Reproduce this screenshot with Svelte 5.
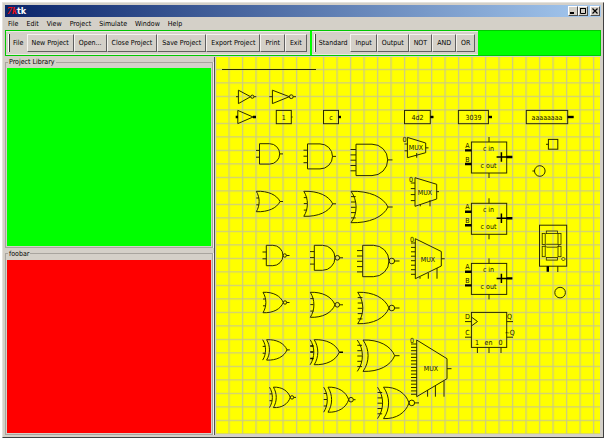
<script>
  const menus = ['File', 'Edit', 'View', 'Project', 'Simulate', 'Window', 'Help'];
  const toolbars = [
    { name: 'File', items: ['New Project', 'Open...', 'Close Project', 'Save Project', 'Export Project', 'Print', 'Exit'] },
    { name: 'Standard', items: ['Input', 'Output', 'NOT', 'AND', 'OR'] }
  ];

  // pin offsets by number of inputs, measured from the top of a gate
  const pinRows = { 2: [6.7, 13.5], 3: [6.3, 12.3, 18.8], 5: [5.3, 10.7, 16, 21.3, 26.6] };
  const heights = { 2: 20.4, 3: 25, 5: 31.4 };
  const bubbles = { 2: 1.7, 3: 2.3, 5: 2.8 };

  // n: inputs, p: start of the pins, x: back of the body, r: front, o: end of output
  const gates = [
    { k: 'and', n: 2, p: 256, x: 259.5, r: 279.7, y: 143.7, o: 283 },
    { k: 'and', n: 3, p: 303.5, x: 307.5, r: 332.5, y: 143.9, o: 336 },
    { k: 'and', n: 5, p: 350.5, x: 356, r: 387.7, y: 144.2, o: 392.5 },
    { k: 'or', n: 2, p: 256.3, x: 256.3, r: 280, y: 191.3, o: 283 },
    { k: 'or', n: 3, p: 303.8, x: 303.8, r: 332.7, y: 191.3, o: 336 },
    { k: 'or', n: 5, p: 351, x: 351, r: 388, y: 191.3, o: 392.7 },
    { k: 'and', inv: true, n: 2, p: 262.5, x: 266.3, r: 283, y: 245.3, o: 289.5 },
    { k: 'and', inv: true, n: 3, p: 310, x: 314.3, r: 335, y: 245.3, o: 343 },
    { k: 'and', inv: true, n: 5, p: 357, x: 362.7, r: 389, y: 245.3, o: 399.5 },
    { k: 'or', inv: true, n: 2, p: 263, x: 263, r: 283.3, y: 292.3, o: 289.5 },
    { k: 'or', inv: true, n: 3, p: 310.3, x: 310.3, r: 335, y: 292.3, o: 343 },
    { k: 'or', inv: true, n: 5, p: 357.7, x: 357.7, r: 389, y: 292.3, o: 399.5 },
    { k: 'xor', n: 2, p: 262.7, x: 266.6, r: 287, y: 339.7, o: 289.8 },
    { k: 'xor', n: 3, p: 310.2, x: 314.2, r: 339.3, y: 339.7, o: 343, bold: true },
    { k: 'xor', n: 5, p: 357.3, x: 363, r: 394.7, y: 340, o: 399.5 },
    { k: 'xor', inv: true, n: 2, p: 269.5, x: 273.4, r: 290.3, y: 387.2, o: 296 },
    { k: 'xor', inv: true, n: 3, p: 323.7, x: 328, r: 348.7, y: 387.2, o: 355.5 },
    { k: 'xor', inv: true, n: 5, p: 377.5, x: 383.5, r: 409, y: 387.2, o: 419 }
  ];

  function back(x, y, h, n) {
    const b = n + 1.8;
    return `M${x} ${y}C${x + b} ${y + h * 0.3} ${x + b} ${y + h * 0.7} ${x} ${y + h}`;
  }

  function body(g) {
    const { k, n, x, r, y } = g;
    const h = heights[n];
    const mid = y + h / 2;
    if (k === 'and') {
      return `M${x} ${y}H${r - h / 2}A${h / 2} ${h / 2} 0 0 1 ${r - h / 2} ${y + h}H${x}Z`;
    }
    const w = r - x;
    let d = back(x, y, h, n);
    d += `M${x} ${y}C${x + w * 0.5} ${y - 0.5} ${x + w * 0.87} ${y + h * 0.18} ${r} ${mid}`;
    d += `C${x + w * 0.87} ${y + h * 0.82} ${x + w * 0.5} ${y + h + 0.5} ${x} ${y + h}`;
    if (k === 'xor') d += back(g.p, y, h, n);
    return d;
  }

  function pins(g) {
    const end = g.k === 'and' ? g.x : g.p + g.n * 0.7 + 1.2;
    return pinRows[g.n].map((v) => `M${g.p} ${g.y + v}H${end}`).join('');
  }

  function output(g) {
    const from = g.inv ? g.r + bubbles[g.n] * 2 : g.r;
    return `M${from} ${g.y + heights[g.n] / 2}H${g.o}`;
  }

  const muxes = [
    { x: 407.4, t: 137.4, b: 157.7, r: 425.7, rt: 143, rb: 152.7, p: 404.5, rows: [144, 150.8], legs: [[416.7, 153]], o: 428.5, tx: 416, ty: 150, zx: 404.5, zy: 142 },
    { x: 415, t: 177.7, b: 206.3, r: 436.7, rt: 184.3, rb: 199, p: 410.8, rows: [183, 188.6, 194.6, 200.6], legs: [[420.3, 204], [430, 200]], o: 439, tx: 425, ty: 195, zx: 411, zy: 182 },
    { x: 415.3, t: 238.7, b: 278.7, r: 441.3, rt: 251.5, rb: 266, p: 411, rows: [243, 247.4, 251.8, 256.2, 260.7, 265.2, 269.7, 274.3], legs: [[420, 277], [428.3, 273], [437, 268]], o: 444.7, tx: 428, ty: 262, zx: 412, zy: 242 },
    { x: 416.7, t: 340, b: 396.7, r: 447, rt: 358.7, rb: 378.7, p: 411, rows: Array.from({ length: 16 }, (_, i) => 344 + i * 3.35), legs: [[427.6, 390], [435.4, 386], [444, 380.5]], o: 451.5, tx: 431, ty: 371, zx: 412, zy: 343 }
  ];

  const boxes = [
    { x: 276.3, w: 15, o: 292.6, text: '1', thin: true },
    { x: 323.5, w: 15, o: 341, text: 'c' },
    { x: 404.5, w: 25.8, o: 433.5, text: '4d2' },
    { x: 458.4, w: 30, o: 492, text: '3039' },
    { x: 526.3, w: 41.4, o: 573.7, text: 'aaaaaaaa' }
  ];

  const adders = [142, 203.3, 263.4];
</script>

<div class="window">
  <header class="title">
    <span class="logo" aria-hidden="true">7k</span>
    <span class="caption">tk</span>
    <div class="controls">
      <button aria-label="Minimize"><svg viewBox="0 0 8 8"><path d="M1 6H5" stroke-width="2" /></svg></button>
      <button aria-label="Maximize"><svg viewBox="0 0 8 8"><path d="M1 1.5H7M1.5 1V6.5H6.5V1" /></svg></button>
      <button aria-label="Close" class="close"><svg viewBox="0 0 8 8"><path d="M1.5 1.5L6.5 6.5M6.5 1.5L1.5 6.5" stroke-width="1.2" /></svg></button>
    </div>
  </header>

  <nav class="menu">
    {#each menus as m}<button>{m}</button>{/each}
  </nav>

  <div class="toolbars">
    {#each toolbars as bar}
      <div class="bar" role="toolbar" aria-label={bar.name}>
        <span class="grip"></span>
        <span class="name">{bar.name}</span>
        {#each bar.items as item}<button>{item}</button>{/each}
      </div>
    {/each}
  </div>

  <main>
    <aside>
      <fieldset class="library"><legend>Project Library</legend><div class="fill green"></div></fieldset>
      <fieldset class="foobar"><legend>foobar</legend><div class="fill red"></div></fieldset>
    </aside>
    <div class="sash"></div>
    <section class="canvas">
      <svg width="100%" height="100%">
        <defs>
          <pattern id="grid" x="12.4" y="11.8" width="13.5" height="13.5" patternUnits="userSpaceOnUse">
            <path d="M.65 0V13.5M0 .65H13.5" stroke="#cccc84" stroke-width="1.3" />
          </pattern>
        </defs>
        <rect width="100%" height="100%" fill="url(#grid)" stroke="none" />
        <g transform="translate(-216 -57)">
          <path d="M222 69.5H316" />

          <path d="M236 96.7H238.4M238.4 90.2V103.6L250.6 96.7ZM254 96.7H256.3" />
          <circle cx="252.3" cy="96.7" r="1.6" />
          <path d="M269.3 96.7H272.4M272.4 90.2V103.6L289.3 96.7ZM293.2 96.7H296" />
          <circle cx="291.3" cy="96.7" r="1.9" />
          <path d="M237.8 110.4V123.6L253 117Z" />
          <path class="bold" d="M235.7 117H238M253 117H256" />

          {#each boxes as b}
            <rect x={b.x} y="110.4" width={b.w} height="13.3" />
            <path class:bold={!b.thin} d="M{b.x + b.w} 117H{b.o}" />
            <text x={b.x + b.w / 2} y="120">{b.text}</text>
          {/each}

          {#each gates as g}
            <path d={body(g)} />
            <path class:semi={g.bold} d={pins(g) + output(g)} />
            {#if g.inv}
              <circle cx={g.r + bubbles[g.n]} cy={g.y + heights[g.n] / 2} r={bubbles[g.n]} />
            {/if}
          {/each}

          {#each muxes as m}
            <path d="M{m.x} {m.t}L{m.r} {m.rt}V{m.rb}L{m.x} {m.b}ZM{m.r} {(m.rt + m.rb) / 2}H{m.o}" />
            <path d={m.rows.map((v) => `M${m.p} ${v}H${m.x}`).join('') + m.legs.map(([x, y]) => `M${x} ${y}V${m.b}`).join('')} />
            <text x={m.tx} y={m.ty}>MUX</text>
            <text x={m.zx} y={m.zy}>0</text>
          {/each}

          {#each adders as y}
            <g transform="translate(0 {y})">
              <rect x="471.4" y="0" width="35.3" height="31" />
              <path d="M489 -5V0M489 31V36" />
              <path class="bold" d="M465 8.4H471.4M465 22H471.4M506.7 15H512.4" />
              <path class="semi" d="M496.6 15H507M501.4 10.3V19.7" />
              <text x="467.5" y="6">A</text>
              <text x="467.5" y="20">B</text>
              <text x="488.5" y="9">c in</text>
              <text x="488.5" y="25.5">c out</text>
            </g>
          {/each}

          <rect x="471.4" y="312.4" width="35.3" height="35" />
          <path d="M471.4 317L477.5 321.5L471.4 326M465 321.6H471.4M465 337.2H471.4M506.7 321.6H513M506.7 337.2H513M477.4 347.4V353M489 347.4V353M501 347.4V353" />
          <text x="467.5" y="319">D</text>
          <text x="467.5" y="335">C</text>
          <text x="509.5" y="319">Q</text>
          <text x="509.5" y="335">~Q</text>
          <text x="477" y="345">1</text>
          <text x="488.5" y="345">en</text>
          <text x="500.5" y="345">0</text>

          <rect x="548.4" y="139.4" width="9.4" height="9.8" />
          <path d="M546 144.3H548.4M532.4 171H534.5" />
          <circle cx="539.8" cy="171" r="5.3" />
          <circle cx="560.1" cy="292.6" r="5.3" />

          <rect x="539.5" y="225.2" width="27.2" height="41" />
          <g class="segments">
            <rect x="546.3" y="231" width="11.2" height="2.6" />
            <path d="M545 245.6L546.6 244.3H557.3L558.8 245.6L557.3 247.2H546.6Z" />
            <rect x="546.3" y="257.5" width="11.2" height="2.6" />
            <rect x="542.2" y="233.5" width="3" height="11" />
            <rect x="558" y="233.5" width="3" height="11" />
            <rect x="542.2" y="246.3" width="3" height="10.4" />
            <rect x="558" y="246.3" width="3" height="10.4" />
            <path d="M563.4 257L565.4 259L563.4 261L561.4 259Z" />
          </g>
          <path class="bold" d="M547.8 266.2V271.8" />
          <path d="M557.8 266.2V272" />
        </g>
      </svg>
    </section>
  </main>
</div>

<style>
  :global(body) {
    background: #fff;
  }
  .window {
    box-sizing: border-box;
    height: calc(100vh - 4px);
    margin: 2px;
    padding: 2px;
    display: flex;
    flex-direction: column;
    background: #d4d0c8;
    border: 1px solid #e4e2dc;
    border-right-color: #404040;
    border-bottom-color: #404040;
    font: 7px/10px 'DejaVu Sans Condensed', 'DejaVu Sans', sans-serif;
    color: #000;
  }
  button {
    font: inherit;
    color: inherit;
    margin: 0;
    padding: 0;
    background: #d4d0c8;
    border: 0;
    white-space: nowrap;
  }
  .title {
    flex: none;
    height: 12px;
    display: flex;
    align-items: center;
    padding: 0 1px 0 2px;
    background: linear-gradient(90deg, #0a246a, #a6caf0);
    color: #fff;
  }
  .logo {
    width: 10px;
    font: italic bold 10px/12px 'Liberation Serif', serif;
    color: #f01010;
  }
  .caption {
    flex: 1;
    font-size: 9px;
    font-weight: bold;
  }
  .controls {
    display: flex;
  }
  .controls button {
    box-sizing: border-box;
    width: 10px;
    height: 10px;
    border: 1px solid;
    border-color: #fff #505050 #505050 #fff;
  }
  .controls .close {
    margin-left: 2px;
  }
  .controls svg {
    display: block;
    width: 8px;
    height: 8px;
    fill: none;
    stroke: #000;
  }
  .menu {
    flex: none;
    height: 13px;
    display: flex;
    align-items: center;
    gap: 8px;
    padding-left: 3px;
  }
  .toolbars {
    flex: none;
    box-sizing: border-box;
    height: 26px;
    display: flex;
    gap: 2px;
    background: #0f0;
    border: 1px solid #00c800;
  }
  .bar {
    display: flex;
    align-items: center;
    padding: 0 3px 0 2px;
    background: #d4d0c8;
    border-top: 1px solid #ece9e2;
    border-bottom: 1px solid #ece9e2;
  }
  .grip {
    width: 1px;
    height: 18px;
    border-right: 1px solid #404040;
    background: #fff;
  }
  .name {
    padding: 0 3px;
  }
  .bar button {
    height: 18px;
    padding: 0 4px;
    border: 1px solid;
    border-color: #f4f2ee #606060 #606060 #f4f2ee;
  }
  main {
    flex: 1;
    min-height: 0;
    display: flex;
    padding: 1px 1px 0 0;
  }
  aside {
    flex: 0 0 208px;
    display: flex;
    flex-direction: column;
    gap: 1px;
  }
  fieldset {
    box-sizing: border-box;
    min-width: 0;
    margin: 0;
    padding: 1px 1px 1px;
    border: 1px solid #a8a59e;
    box-shadow: 1px 0 #f4f2ee;
  }
  .library {
    flex: 191;
  }
  .foobar {
    flex: 186;
  }
  legend {
    margin-left: 1px;
    padding: 0 1px;
  }
  .fill {
    height: 100%;
  }
  .green {
    background: #0f0;
  }
  .red {
    background: #f00;
  }
  .sash {
    flex: none;
    width: 1px;
    margin: 0 1px;
    background: #505050;
  }
  .canvas {
    flex: 1;
    min-width: 0;
    overflow: hidden;
    background: #ff0;
    margin-bottom: 1px;
  }
  .canvas svg {
    display: block;
    fill: none;
    stroke: #2a2a00;
    stroke-width: 1;
  }
  .canvas text {
    fill: #111100;
    stroke: none;
    text-anchor: middle;
  }
  .canvas .bold {
    stroke: #000;
    stroke-width: 2.4;
  }
  .canvas .semi {
    stroke: #000;
    stroke-width: 1.5;
  }
  .canvas .segments {
    stroke-width: 0.8;
  }
</style>
